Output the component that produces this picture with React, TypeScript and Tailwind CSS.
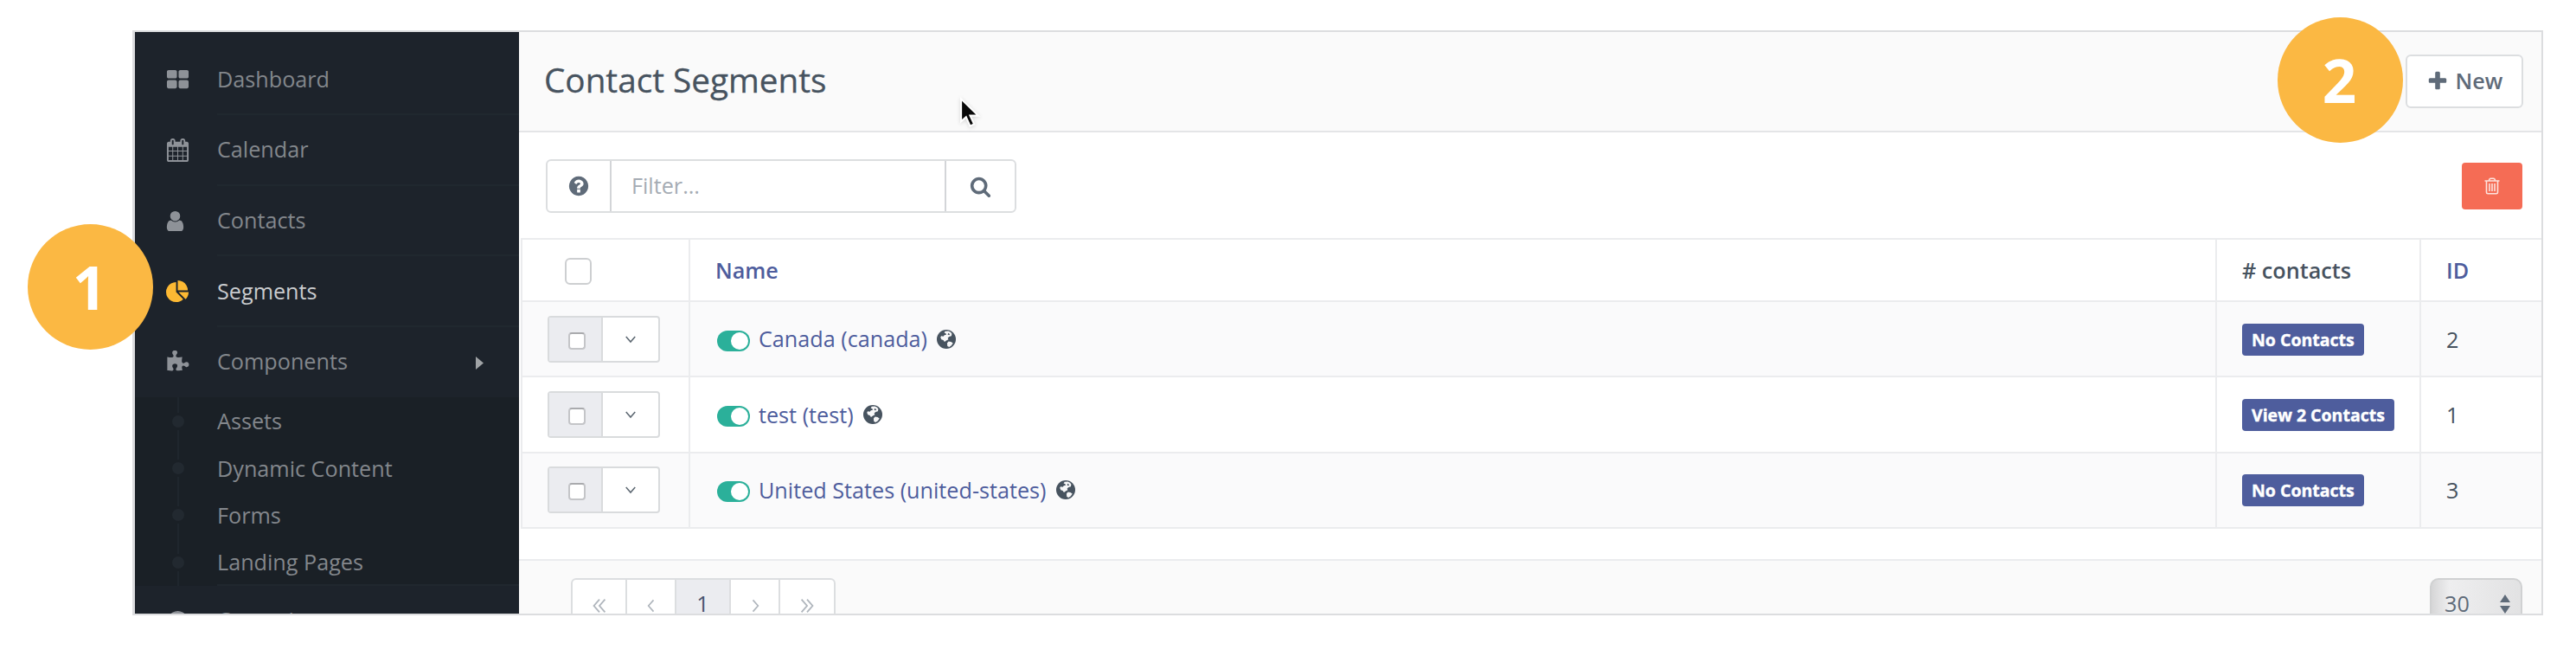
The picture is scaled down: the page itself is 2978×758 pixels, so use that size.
import React from "react";

type GlyphProps = { d: string; className?: string };
const Glyph = ({ d, className }: GlyphProps) => (
  <svg viewBox="0 0 1792 1792" fill="currentColor" className={className}>
    <path d={d} />
  </svg>
);

const ICONS = {
  grid: "M832 1024v384q0 52-38 90t-90 38h-512q-52 0-90-38t-38-90v-384q0-52 38-90t90-38h512q52 0 90 38t38 90zm0-768v384q0 52-38 90t-90 38h-512q-52 0-90-38t-38-90v-384q0-52 38-90t90-38h512q52 0 90 38t38 90zm896 768v384q0 52-38 90t-90 38h-512q-52 0-90-38t-38-90v-384q0-52 38-90t90-38h512q52 0 90 38t38 90zm0-768v384q0 52-38 90t-90 38h-512q-52 0-90-38t-38-90v-384q0-52 38-90t90-38h512q52 0 90 38t38 90z",
  calendar:
    "M192 1664h288v-288h-288v288zm352 0h320v-288h-320v288zm-352-352h288v-320h-288v320zm352 0h320v-320h-320v320zm-352-384h288v-288h-288v288zm736 736h320v-288h-320v288zm-384-736h320v-288h-320v288zm768 736h288v-288h-288v288zm-384-352h320v-320h-320v320zm-352-864v-288q0-13-9.5-22.5t-22.5-9.5h-64q-13 0-22.5 9.5t-9.5 22.5v288q0 13 9.5 22.5t22.5 9.5h64q13 0 22.5-9.5t9.5-22.5zm736 864h288v-320h-288v320zm-384-384h320v-288h-320v288zm384 0h288v-288h-288v288zm32-480v-288q0-13-9.5-22.5t-22.5-9.5h-64q-13 0-22.5 9.5t-9.5 22.5v288q0 13 9.5 22.5t22.5 9.5h64q13 0 22.5-9.5t9.5-22.5zm384-64v1280q0 52-38 90t-90 38h-1408q-52 0-90-38t-38-90v-1280q0-52 38-90t90-38h128v-96q0-66 47-113t113-47h64q66 0 113 47t47 113v96h384v-96q0-66 47-113t113-47h64q66 0 113 47t47 113v96h128q52 0 90 38t38 90z",
  user: "M1536 1399q0 109-62.5 187t-150.5 78h-854q-88 0-150.5-78t-62.5-187q0-85 8.5-160.5t31.5-152 58.5-131 94-89 134.5-34.5q131 128 313 128t313-128q76 0 134.5 34.5t94 89 58.5 131 31.5 152 8.5 160.5zm-256-887q0 159-112.5 271.5t-271.5 112.5-271.5-112.5-112.5-271.5 112.5-271.5 271.5-112.5 271.5 112.5 112.5 271.5z",
  pie: "M768 890l546 546q-106 108-247.5 168t-298.5 60q-209 0-385.5-103t-279.5-279.5-103-385.5 103-385.5 279.5-279.5 385.5-103v762zm187 6h773q0 157-60 298.5t-168 247.5zm709-128h-768v-768q209 0 385.5 103t279.5 279.5 103 385.5z",
  puzzle:
    "M1755 1083q0 81-44.5 135t-123.5 54q-41 0-77.5-17.5t-59-38-56.5-38-71-17.5q-110 0-110 124 0 39 16 115t15 115v5q-22 0-33 1-34 3-97.5 11.5t-115.5 13.5-98 5q-61 0-103-26.5t-42-83.5q0-37 17.5-71t38-56.5 38-59 17.5-77.5q0-79-54-123.5t-135-44.5q-84 0-143 45.5t-59 127.5q0 43 15 83t33.5 64.5 33.5 53 15 50.5q0 45-46 89-37 35-117 35-95 0-245-24-9-2-27.5-4t-27.5-4l-13-2q-1 0-3-1-2 0-2-1v-1024q2 1 17.5 3.5t34 5 21.5 3.5q150 24 245 24 80 0 117-35 46-44 46-89 0-22-15-50.5t-33.5-53-33.5-64.5-15-83q0-82 59-127.5t144-45.5q80 0 134 44.5t54 123.5q0 41-17.5 77.5t-38 59-38 56.5-17.5 71q0 57 42 83.5t103 26.5q64 0 180-15t163-17v2q-1 2-3.5 17.5t-5 34-3.5 21.5q-24 150-24 245 0 80 35 117 44 46 89 46 22 0 50.5-15t53-33.5 64.5-33.5 83-15q82 0 127.5 59t45.5 143z",
  help: "M1024 1376v-192q0-14-9-23t-23-9h-192q-14 0-23 9t-9 23v192q0 14 9 23t23 9h192q14 0 23-9t9-23zm256-672q0-88-55.5-163t-138.5-116-170-41q-243 0-371 213-15 24 8 42l132 100q7 6 19 6 16 0 25-12 53-68 86-92 34-24 86-24 48 0 85.5 26t37.5 59q0 38-20 61t-68 45q-63 28-115.5 86.5t-52.5 125.5v36q0 14 9 23t23 9h192q14 0 23-9t9-23q0-19 21.5-49.5t54.5-49.5q32-18 49-28.5t46-35 44.5-48 28-60.5 12.5-81zm384 192q0 209-103 385.5t-279.5 279.5-385.5 103-385.5-103-279.5-279.5-103-385.5 103-385.5 279.5-279.5 385.5-103 385.5 103 279.5 279.5 103 385.5z",
  search:
    "M1216 832q0-185-131.5-316.5t-316.5-131.5-316.5 131.5-131.5 316.5 131.5 316.5 316.5 131.5 316.5-131.5 131.5-316.5zm512 832q0 52-38 90t-90 38q-54 0-90-38l-343-342q-179 124-399 124-143 0-273.5-55.5t-225-150-150-225-55.5-273.5 55.5-273.5 150-225 225-150 273.5-55.5 273.5 55.5 225 150 150 225 55.5 273.5q0 220-124 399l343 343q37 37 37 90z",
  plus: "M1600 736v192q0 40-28 68t-68 28h-416v416q0 40-28 68t-68 28h-192q-40 0-68-28t-28-68v-416h-416q-40 0-68-28t-28-68v-192q0-40 28-68t68-28h416v-416q0-40 28-68t68-28h192q40 0 68 28t28 68v416h416q40 0 68 28t28 68z",
  clock:
    "M1024 544v448q0 14-9 23t-23 9h-320q-14 0-23-9t-9-23v-64q0-14 9-23t23-9h224v-352q0-14 9-23t23-9h64q14 0 23 9t9 23zm416 352q0-148-73-273t-198-198-273-73-273 73-198 198-73 273 73 273 198 198 273 73 273-73 198-198 73-273zm224 0q0 209-103 385.5t-279.5 279.5-385.5 103-385.5-103-279.5-279.5-103-385.5 103-385.5 279.5-279.5 385.5-103 385.5 103 279.5 279.5 103 385.5z",
};

const Globe = () => (
  <svg viewBox="0 0 24 24" className="-mt-[1px] ml-[11px] h-[22px] w-[22px]">
    <circle cx="12" cy="12" r="12" fill="#47535f" />
    <path
      fill="#f7f7f8"
      d="M10.5 2 14.5 1.6 17.5 3 19 5.2 18.4 8 15.6 8.6 13.8 10.4 14.6 12.2 12 13.6 9.8 15.4 8.2 13.2 5.8 12.4 4.6 9.6 5.6 8 8.2 8.4 9.6 6.8 12 6.2 11.2 4.4 9.4 4z"
    />
    <path fill="#f7f7f8" d="M14.8 14.6 18 15.2 20.4 17 18.4 19.8 15.6 21.8 13.4 20.6 13 17z" />
    <path fill="#47535f" d="M14.6 4.2 16.6 5.6 15.4 6.8 13.6 6z" />
  </svg>
);

const NAV = [
  { label: "Dashboard", icon: ICONS.grid, shift: "" },
  { label: "Calendar", icon: ICONS.calendar, shift: "" },
  { label: "Contacts", icon: ICONS.user, shift: "-ml-[3px] mr-[3px]" },
  { label: "Segments", icon: ICONS.pie, active: true, shift: "" },
  { label: "Components", icon: ICONS.puzzle, arrow: true, shift: "" },
];

const SUB = ["Assets", "Dynamic Content", "Forms", "Landing Pages"];

const NavItem = ({ item }: { item: { label: string; icon: string; active?: boolean; arrow?: boolean; shift: string } }) => (
  <li className="flex h-[81.6px] shrink-0 items-stretch pl-[36px]">
    <span className={`flex w-[59px] items-center ${item.active ? "text-[#fdb933]" : "text-[#8e9298]"}`}>
      <Glyph d={item.icon} className={`h-[27px] w-[27px] ${item.shift}`} />
    </span>
    <span
      className={`flex flex-1 items-center justify-between border-b-2 pt-[1px] pr-[41px] ${item.arrow ? "border-transparent" : "border-[#20282f]"} ${item.active ? "text-[#c9cbce]" : "text-[#83878c]"}`}
    >
      {item.label}
      {item.arrow && (
        <svg viewBox="0 0 9 15" className="mt-[2px] h-[15px] w-[9px]" fill="#a0a3a6">
          <path d="M0 0 9 7.5 0 15z" />
        </svg>
      )}
    </span>
  </li>
);

const Sidebar = () => (
  <nav className="h-full w-[444px] shrink-0 overflow-hidden bg-[#1d232b] pt-[14.5px] text-[25.2px]">
    <ul className="flex flex-col">
      {NAV.map((item) => (
        <NavItem key={item.label} item={item} />
      ))}
      <li>
        <ul className="bg-[#1a2026]">
          {SUB.map((label, i) => (
            <li key={label} className="flex h-[54.4px] items-center pl-[40px]">
              <span className="flex h-full w-[20px] flex-col items-center">
                <span className="w-[2px] flex-1 bg-[#1f262d]" />
                <span className="my-[3px] h-[14px] w-[14px] rounded-full bg-[#222930]" />
                <span className="w-[2px] flex-1 bg-[#1f262d]" />
              </span>
              <span
                className={`ml-[35px] flex h-full flex-1 items-center border-b-2 pt-[3px] text-[#83878c] ${i === SUB.length - 1 ? "border-[#20282f]" : "border-transparent"}`}
              >
                {label}
              </span>
            </li>
          ))}
        </ul>
      </li>
      <NavItem item={{ label: "Campaigns", icon: ICONS.clock, shift: "" }} />
    </ul>
  </nav>
);

const ROWS = [
  { name: "Canada (canada)", badge: "No Contacts", id: 2 },
  { name: "test (test)", badge: "View 2 Contacts", id: 1 },
  { name: "United States (united-states)", badge: "No Contacts", id: 3 },
];

const COLS = "grid grid-cols-[194px_1765px_236px_1fr]";
const CELL = "flex items-center border-r-2 border-[#ebecee]";

const Chevron = ({ d, className }: { d: string; className: string }) => (
  <svg viewBox="0 0 24 24" fill="none" stroke="currentColor" strokeWidth="2" className={className}>
    <path d={d} />
  </svg>
);

const Table = () => (
  <div className="ml-[2px] border-l-2 border-[#ebecee]">
    <div className={`${COLS} h-[72px] border-t-2 border-[#ebecee] bg-white pt-px text-[25.2px] font-semibold`}>
      <div className={`${CELL} -mt-px pl-[49px]`}>
        <span className="mt-[3px] h-[31px] w-[31px] rounded-[6px] border-2 border-[#cdcfd1] bg-white" />
      </div>
      <div className={`${CELL} -mt-px pt-[2px] pl-[29px] text-[#4e5d9d]`}>Name</div>
      <div className={`${CELL} -mt-px pt-[2px] pl-[29px] text-[#47535f]`}># contacts</div>
      <div className="flex items-center pt-px pl-[29px] text-[#4e5d9d]">ID</div>
    </div>
    {ROWS.map((row, i) => (
      <div
        key={row.id}
        className={`${COLS} h-[87.3px] border-t-2 border-[#ebecee] text-[25.2px] ${i % 2 === 0 ? "bg-[#fafafb]" : "bg-white"}`}
      >
        <div className={`${CELL} pl-[29px]`}>
          <span className="flex h-[54px] w-[130px] rounded-[4px] border-2 border-[#d9dbdd] bg-white">
            <span className="flex w-[62px] items-center justify-center border-r-2 border-[#d9dbdd] bg-[#ebecf0]">
              <span className="mt-[4px] ml-[3px] h-[20px] w-[20px] rounded-[4px] border-2 border-[#c4c5c8] border-t-[#a9aaad] bg-white" />
            </span>
            <span className="flex flex-1 items-center justify-center text-[#5b6670]">
              <Chevron d="m5 8 7 8 7-8" className="h-[18px] w-[18px]" />
            </span>
          </span>
        </div>
        <div className={`${CELL} pt-px pl-[31px]`}>
          <span className="mt-[3px] flex h-[24px] w-[38px] justify-end rounded-full bg-[#2bb09a] p-[2px]">
            <span className="h-[20px] w-[20px] rounded-full bg-white" />
          </span>
          <span className="ml-[10px] text-[#4e5d9d]">{row.name}</span>
          <Globe />
        </div>
        <div className={`${CELL} pt-px pl-[29px]`}>
          <span className="rounded-[4px] bg-[#4e5d9d] px-[11px] text-[19.5px] leading-[37px] font-bold text-white [-webkit-text-stroke:0.4px_white]">
            {row.badge}
          </span>
        </div>
        <div className="flex items-center pt-[2px] pl-[29px] text-[#47535f]">{row.id}</div>
      </div>
    ))}
    <div className="border-t-2 border-[#ebecee]" />
  </div>
);

const Pager = () => {
  const cell = "flex items-center justify-center border-r-2 border-[#dcdee0] text-[#b0b6bd]";
  return (
    <div className="flex h-[65px] w-[306px] rounded-t-[6px] border-2 border-[#dcdee0] bg-white">
      <span className={`${cell} w-[63px]`}>
        <Chevron d="m12 4-7 8 7 8m7-16-7 8 7 8" className="h-[22px] w-[22px]" />
      </span>
      <span className={`${cell} w-[57px]`}>
        <Chevron d="m15 4-7 8 7 8" className="h-[20px] w-[20px]" />
      </span>
      <span className={`${cell} w-[63px] bg-[#ebecf0] pb-[4px] text-[25.2px]`}>
        <span className="text-[#47536f]">1</span>
      </span>
      <span className={`${cell} w-[57px]`}>
        <Chevron d="m9 4 7 8-7 8" className="h-[20px] w-[20px]" />
      </span>
      <span className="flex flex-1 items-center justify-center text-[#b0b6bd]">
        <Chevron d="m5 4 7 8-7 8m7-16 7 8-7 8" className="h-[22px] w-[22px]" />
      </span>
    </div>
  );
};

const Step = ({ n, className }: { n: number; className: string }) => (
  <div
    className={`absolute flex h-[145px] w-[145px] items-center justify-center rounded-full bg-[#fbb843] pr-[2px] text-[69px] leading-none font-bold text-white ${className}`}
  >
    {n}
  </div>
);

export default function App() {
  return (
    <div className="relative h-[758px] w-[2978px] overflow-hidden bg-white pt-[35px] pl-[153px] font-['Open_Sans',sans-serif]">
      <div className="flex h-[676px] w-[2787px] overflow-hidden border-2 border-l-3 border-[#dcdddf] bg-white">
        <Sidebar />
        <main className="flex flex-1 flex-col">
          <header className="flex h-[116px] shrink-0 items-center justify-between border-b-2 border-[#e4e5e7] bg-[#fafafa] pr-[21px] pb-[3px] pl-[29px]">
            <h1 className="text-[38.7px] text-[#47535f] [-webkit-text-stroke:0.3px_#47535f]">Contact Segments</h1>
            <button className="mt-[2px] flex h-[62px] w-[136px] items-center justify-center gap-[8px] rounded-[6px] border-2 border-[#dcdee0] bg-white text-[25.2px] font-semibold text-[#5f6b79]">
              <Glyph d={ICONS.plus} className="h-[26px] w-[26px]" />
              New
            </button>
          </header>
          <div className="flex h-[122px] shrink-0 items-center justify-between pt-[2px] pr-[22px] pl-[31px]">
            <div className="flex h-[62px] w-[544px] rounded-[6px] border-2 border-[#dcdee0] text-[#5f6b79]">
              <span className="flex w-[72px] items-center justify-center">
                <Glyph d={ICONS.help} className="h-[26px] w-[26px]" />
              </span>
              <span className="flex flex-1 items-center border-x-2 border-[#d3d5d8] pl-[23px] text-[25.2px] text-[#a5acb4]">
                Filter...
              </span>
              <span className="flex w-[79px] items-center justify-center pt-px">
                <Glyph d={ICONS.search} className="h-[25px] w-[25px]" />
              </span>
            </div>
            <button className="flex h-[54px] w-[70px] items-center justify-center rounded-[4px] bg-[#f56c55] text-[#fde3de]">
              <svg viewBox="0 0 18 20" fill="none" stroke="currentColor" strokeWidth="1.6" className="h-[20px] w-[18px]">
                <path d="M0.5 4h17M5.5 4q0-2.8 2-2.8h3q2 0 2 2.8M2.5 4v13.2q0 1.6 1.6 1.6h9.8q1.6 0 1.6-1.6V4M6 7v9M9 7v9M12 7v9" />
              </svg>
            </button>
          </div>
          <Table />
          <div className="h-[35px] shrink-0" />
          <footer className="flex h-[120px] shrink-0 justify-between border-t-2 border-[#ebecee] bg-[#fafafa] pt-[20px] pr-[22px] pl-[60px]">
            <Pager />
            <div className="flex h-[60px] w-[107px] items-center justify-between rounded-[10px] border-2 border-[#d0d1d2] bg-linear-to-r from-[#d6d6d7] via-[#eeeeef] via-20% to-[#e2e2e3] pr-[12px] pl-[15px] text-[25.2px] text-[#5f6b79]">
              30
              <svg viewBox="0 0 12 22" className="h-[22px] w-[12px]" fill="currentColor">
                <path d="M0 9 6 0l6 9zM0 13l6 9 6-9z" />
              </svg>
            </div>
          </footer>
        </main>
      </div>
      <Step n={1} className="top-[259px] left-[32px]" />
      <Step n={2} className="top-[20px] left-[2633px]" />
      <svg viewBox="0 0 24 36" className="absolute top-[112px] left-[1109px] h-[38px] w-[25px] drop-shadow-sm">
        <path d="M2 2v25l5.500-5 4.500 10 4.500-2-4.500-9.500h9z" fill="#0a0a0a" stroke="#fff" strokeWidth="2" />
      </svg>
    </div>
  );
}
